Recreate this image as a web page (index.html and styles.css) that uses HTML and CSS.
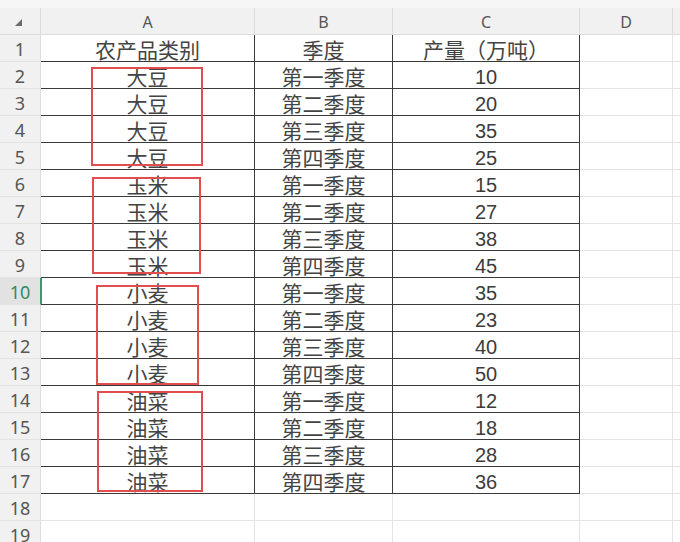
FILE: index.html
```html
<!DOCTYPE html>
<html lang="zh">
<head>
<meta charset="utf-8">
<link rel="stylesheet" href="styles.css">
</head>
<body>
<div class="sheet">
  <div class="topstrip"></div>
  <div class="grid">
    <div class="corner"><svg width="10" height="10" viewBox="0 0 10 10"><polygon points="8,1 8,8 1,8" fill="#6b6b6b"/></svg></div>
    <div class="ch">A</div><div class="ch">B</div><div class="ch">C</div><div class="ch">D</div><div class="ch last"></div>

    <div class="rh">1</div><div class="t">农产品类别</div><div class="t">季度</div><div class="t">产量（万吨）</div><div class="c"></div><div class="c last"></div>
    <div class="rh">2</div><div class="t">大豆</div><div class="t">第一季度</div><div class="t num">10</div><div class="c"></div><div class="c last"></div>
    <div class="rh">3</div><div class="t">大豆</div><div class="t">第二季度</div><div class="t num">20</div><div class="c"></div><div class="c last"></div>
    <div class="rh">4</div><div class="t">大豆</div><div class="t">第三季度</div><div class="t num">35</div><div class="c"></div><div class="c last"></div>
    <div class="rh">5</div><div class="t">大豆</div><div class="t">第四季度</div><div class="t num">25</div><div class="c"></div><div class="c last"></div>
    <div class="rh">6</div><div class="t">玉米</div><div class="t">第一季度</div><div class="t num">15</div><div class="c"></div><div class="c last"></div>
    <div class="rh">7</div><div class="t">玉米</div><div class="t">第二季度</div><div class="t num">27</div><div class="c"></div><div class="c last"></div>
    <div class="rh">8</div><div class="t">玉米</div><div class="t">第三季度</div><div class="t num">38</div><div class="c"></div><div class="c last"></div>
    <div class="rh">9</div><div class="t">玉米</div><div class="t">第四季度</div><div class="t num">45</div><div class="c"></div><div class="c last"></div>
    <div class="rh active">10</div><div class="t sel">小麦</div><div class="t">第一季度</div><div class="t num">35</div><div class="c"></div><div class="c last"></div>
    <div class="rh">11</div><div class="t">小麦</div><div class="t">第二季度</div><div class="t num">23</div><div class="c"></div><div class="c last"></div>
    <div class="rh">12</div><div class="t">小麦</div><div class="t">第三季度</div><div class="t num">40</div><div class="c"></div><div class="c last"></div>
    <div class="rh">13</div><div class="t">小麦</div><div class="t">第四季度</div><div class="t num">50</div><div class="c"></div><div class="c last"></div>
    <div class="rh">14</div><div class="t">油菜</div><div class="t">第一季度</div><div class="t num">12</div><div class="c"></div><div class="c last"></div>
    <div class="rh">15</div><div class="t">油菜</div><div class="t">第二季度</div><div class="t num">18</div><div class="c"></div><div class="c last"></div>
    <div class="rh">16</div><div class="t">油菜</div><div class="t">第三季度</div><div class="t num">28</div><div class="c"></div><div class="c last"></div>
    <div class="rh">17</div><div class="t">油菜</div><div class="t">第四季度</div><div class="t num">36</div><div class="c"></div><div class="c last"></div>
    <div class="rh">18</div><div class="c"></div><div class="c"></div><div class="c"></div><div class="c"></div><div class="c last"></div>
    <div class="rh">19</div><div class="c"></div><div class="c"></div><div class="c"></div><div class="c"></div><div class="c last"></div>
  </div>

  <div class="mark m1"></div>
  <div class="mark m2"></div>
  <div class="mark m3"></div>
  <div class="mark m4"></div>
</div>
</body>
</html>
```

FILE: styles.css
```css
* { box-sizing: border-box; }
html, body {
  margin: 0;
  padding: 0;
  background: #ffffff;
  overflow: hidden;
}
.sheet {
  position: relative;
  width: 680px;
  height: 542px;
  overflow: hidden;
}
.topstrip {
  height: 8px;
  background: #f6f6f6;
}
.grid {
  display: grid;
  grid-template-columns: 41px 214px 138px 187px 93px 1fr;
  grid-auto-rows: 27px;
}
.grid > div {
  border-right: 1px solid #e4e4e4;
  border-bottom: 1px solid #e4e4e4;
  display: flex;
  align-items: center;
  justify-content: center;
}
.corner {
  background: #f1f1f1;
  border-right-color: #dcdcdc !important;
  border-bottom-color: #dcdcdc !important;
  align-items: flex-start !important;
  justify-content: flex-start !important;
  padding: 10px 0 0 14px;
}
.corner svg { display: block; }
.ch {
  background: #f1f1f1;
  border-right-color: #dcdcdc !important;
  border-bottom-color: #dcdcdc !important;
  font-family: "Noto Sans", "Open Sans", sans-serif;
  font-size: 16px;
  color: #555555;
  padding-top: 1px;
}
.rh {
  background: #f1f1f1;
  border-right-color: #dcdcdc !important;
  border-bottom-color: #e3e3e3 !important;
  font-family: "Noto Sans", "Open Sans", sans-serif;
  font-size: 18px;
  color: #555555;
  padding-top: 1px;
}
.rh.active {
  background: #e2e2e2;
  color: #2f8a63;
  border-right-color: #3a9a6e !important;
}
.t {
  border-right-color: #3a3a3a !important;
  border-bottom-color: #3a3a3a !important;
  font-family: "Liberation Sans", "Noto Sans CJK SC", sans-serif;
  font-size: 21px;
  color: #444444;
  line-height: 21px;
  padding-top: 5px;
}
.t.num {
  font-size: 20px;
  color: #3c3c3c;
}
.t.sel {
  box-shadow: inset 1px 0 0 #3a9a6e;
}
.last { border-right: none !important; }
.mark {
  position: absolute;
  border: 2px solid #e24e4e;
  pointer-events: none;
}
.m1 { left: 91px; top: 67px; width: 112px; height: 99px; }
.m2 { left: 92px; top: 177px; width: 109px; height: 97px; }
.m3 { left: 96px; top: 285px; width: 103px; height: 100px; }
.m4 { left: 97px; top: 391px; width: 106px; height: 101px; }
```
